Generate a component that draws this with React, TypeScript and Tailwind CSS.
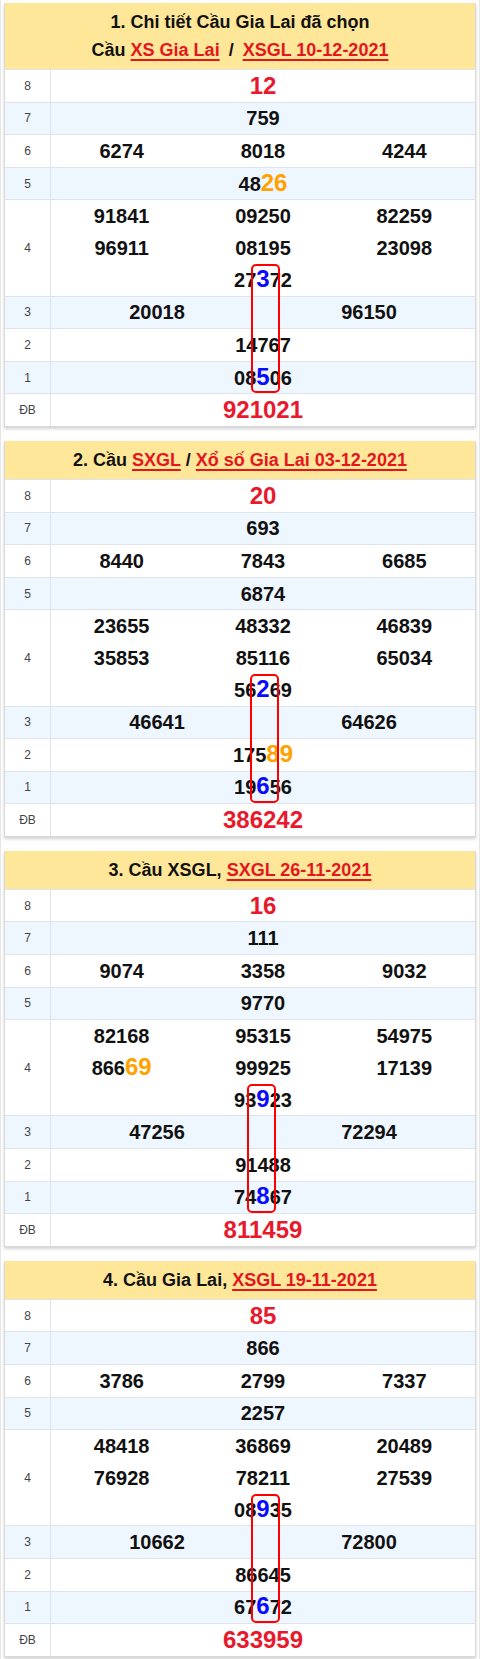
import React from "react";

type Row = { label: string; nums: string[]; red?: boolean };

type Cau = {
  title: React.ReactNode;
  twoLine?: boolean;
  boxLeft: string;
  rows: Row[];
};

// "27[3]72" -> blue digit, "48{26}" -> orange digits
function Num({ value }: { value: string }) {
  const parts: React.ReactNode[] = [];
  const re = /\[(\d+)\]|\{(\d+)\}|(\d+)/g;
  let m: RegExpExecArray | null;
  let i = 0;
  while ((m = re.exec(value))) {
    if (m[1]) {
      parts.push(
        <span key={i++} className="text-[24px] leading-none text-[#0a0aff]">
          {m[1]}
        </span>
      );
    } else if (m[2]) {
      parts.push(
        <span key={i++} className="text-[24px] leading-none text-[#ffa200]">
          {m[2]}
        </span>
      );
    } else {
      parts.push(<span key={i++}>{m[3]}</span>);
    }
  }
  return <span>{parts}</span>;
}

const A = ({ children }: { children: React.ReactNode }) => (
  <a className="text-[#e3161f] underline decoration-[1.5px] underline-offset-[3px]">
    {children}
  </a>
);

const makeRows = (
  g8: string,
  g7: string,
  g6: string[],
  g5: string,
  g4: string[],
  g3: string[],
  g2: string,
  g1: string,
  db: string
): Row[] => [
  { label: "8", nums: [g8], red: true },
  { label: "7", nums: [g7] },
  { label: "6", nums: g6 },
  { label: "5", nums: [g5] },
  { label: "4", nums: g4 },
  { label: "3", nums: g3 },
  { label: "2", nums: [g2] },
  { label: "1", nums: [g1] },
  { label: "ĐB", nums: [db], red: true },
];

const caus: Cau[] = [
  {
    twoLine: true,
    title: (
      <>
        <div>1. Chi tiết Cầu Gia Lai đã chọn</div>
        <div>
          Cầu <A>XS Gia Lai</A>
          <span className="mx-[9px]">/</span>
          <A>XSGL 10-12-2021</A>
        </div>
      </>
    ),
    boxLeft: "left-[246px]",
    rows: makeRows(
      "12",
      "759",
      ["6274", "8018", "4244"],
      "48{26}",
      ["91841", "09250", "82259", "96911", "08195", "23098", "27[3]72"],
      ["20018", "96150"],
      "14767",
      "08[5]06",
      "921021"
    ),
  },
  {
    title: (
      <>
        2. Cầu <A>SXGL</A> / <A>Xổ số Gia Lai 03-12-2021</A>
      </>
    ),
    boxLeft: "left-[245px]",
    rows: makeRows(
      "20",
      "693",
      ["8440", "7843", "6685"],
      "6874",
      ["23655", "48332", "46839", "35853", "85116", "65034", "56[2]69"],
      ["46641", "64626"],
      "175{89}",
      "19[6]56",
      "386242"
    ),
  },
  {
    title: (
      <>
        3. Cầu XSGL, <A>SXGL 26-11-2021</A>
      </>
    ),
    boxLeft: "left-[242px]",
    rows: makeRows(
      "16",
      "111",
      ["9074", "3358", "9032"],
      "9770",
      ["82168", "95315", "54975", "866{69}", "99925", "17139", "93[9]23"],
      ["47256", "72294"],
      "91488",
      "74[8]67",
      "811459"
    ),
  },
  {
    title: (
      <>
        4. Cầu Gia Lai, <A>XSGL 19-11-2021</A>
      </>
    ),
    boxLeft: "left-[246px]",
    rows: makeRows(
      "85",
      "866",
      ["3786", "2799", "7337"],
      "2257",
      ["48418", "36869", "20489", "76928", "78211", "27539", "08[9]35"],
      ["10662", "72800"],
      "86645",
      "67[6]72",
      "633959"
    ),
  },
];

function ResultRow({ row, index }: { row: Row; index: number }) {
  const bg = index % 2 === 1 ? "bg-[#eef6ff]" : "bg-white";
  const isG4 = row.label === "4";
  return (
    <div
      className={`flex border-t border-[#dfe4ea] ${bg} ${
        isG4 ? "h-[96.2px]" : "h-[32.6px]"
      }`}
    >
      <div className="flex w-[46px] shrink-0 items-center justify-center border-r border-[#dfe4ea] text-[12px] text-[#444]">
        {row.label}
      </div>
      <div className="flex-1 font-bold text-[20px] text-[#111]">
        {isG4 ? (
          <div className="flex h-full flex-col">
            <div className="grid flex-1 grid-cols-3 items-center text-center">
              {row.nums.slice(0, 3).map((n) => (
                <Num key={n} value={n} />
              ))}
            </div>
            <div className="grid flex-1 grid-cols-3 items-center text-center">
              {row.nums.slice(3, 6).map((n) => (
                <Num key={n} value={n} />
              ))}
            </div>
            <div className="flex flex-1 items-center justify-center">
              <Num value={row.nums[6]} />
            </div>
          </div>
        ) : row.red ? (
          <div className="flex h-full items-center justify-center text-[24px] text-[#e8192c]">
            {row.nums[0]}
          </div>
        ) : row.nums.length === 3 ? (
          <div className="grid h-full grid-cols-3 items-center text-center">
            {row.nums.map((n) => (
              <Num key={n} value={n} />
            ))}
          </div>
        ) : row.nums.length === 2 ? (
          <div className="grid h-full grid-cols-2 items-center text-center">
            {row.nums.map((n) => (
              <Num key={n} value={n} />
            ))}
          </div>
        ) : (
          <div className="flex h-full items-center justify-center">
            <Num value={row.nums[0]} />
          </div>
        )}
      </div>
    </div>
  );
}

function CauCard({ cau }: { cau: Cau }) {
  return (
    <div className="border-x border-b border-[#d9d9d9] bg-white shadow-[0_2px_3px_rgba(0,0,0,0.18)]">
      <div
        className={`bg-[#ffe79a] text-center text-[18px] font-bold text-[#111] ${
          cau.twoLine ? "py-[5px] leading-[28px]" : "h-[38px] leading-[38px]"
        }`}
      >
        {cau.title}
      </div>
      <div className="relative">
        {cau.rows.map((r, i) => (
          <ResultRow key={r.label} row={r} index={i} />
        ))}
        <div
          className={`absolute top-[195px] h-[129px] w-[29px] rounded-[5px] border-2 border-[#f00] ${cau.boxLeft}`}
        />
      </div>
    </div>
  );
}

export default function App() {
  return (
    <div className="min-h-[1659px] w-[480px] border-x border-[#e6e6e6] bg-white px-[3px] pt-[3px] font-['Liberation_Sans',Arial,sans-serif]">
      <div className="flex flex-col gap-[14px]">
        {caus.map((c, i) => (
          <CauCard key={i} cau={c} />
        ))}
      </div>
    </div>
  );
}
